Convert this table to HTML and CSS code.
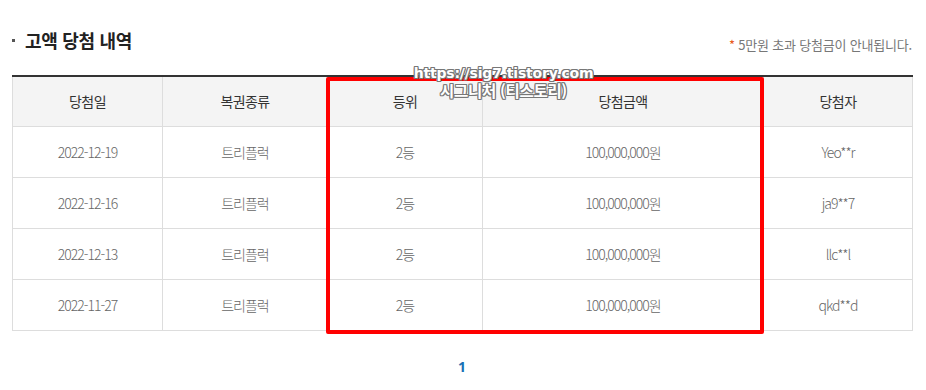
FILE: index.html
```html
<!DOCTYPE html>
<html lang="ko">
<head>
<meta charset="utf-8">
<link rel="stylesheet" href="styles.css">
</head>
<body>
<div class="page">
  <div class="head">
    <h2 class="title"><span class="dot"></span>고액 당첨 내역</h2>
    <p class="note"><span class="ast">*</span> 5만원 초과 당첨금이 안내됩니다.</p>
  </div>
  <div class="tablewrap">
    <table class="list">
      <colgroup>
        <col class="c1"><col class="c2"><col class="c3"><col class="c4"><col class="c5">
      </colgroup>
      <thead>
        <tr><th>당첨일</th><th>복권종류</th><th>등위</th><th>당첨금액</th><th>당첨자</th></tr>
      </thead>
      <tbody>
        <tr><td>2022-12-19</td><td>트리플럭</td><td>2등</td><td>100,000,000원</td><td>Yeo**r</td></tr>
        <tr><td>2022-12-16</td><td>트리플럭</td><td>2등</td><td>100,000,000원</td><td>ja9**7</td></tr>
        <tr><td>2022-12-13</td><td>트리플럭</td><td>2등</td><td>100,000,000원</td><td>llc**l</td></tr>
        <tr><td>2022-11-27</td><td>트리플럭</td><td>2등</td><td>100,000,000원</td><td>qkd**d</td></tr>
      </tbody>
    </table>
    <div class="redbox"></div>
    <div class="watermark">
      <div class="wm1">https://sig7.tistory.com</div>
      <div class="wm2">시그니처 (티스토리)</div>
    </div>
  </div>
  <div class="paging"><a class="cur">1</a></div>
</div>
</body>
</html>
```

FILE: styles.css
```css
* { box-sizing: border-box; }
html, body { margin: 0; padding: 0; background: #fff; }
body { font-family: "Noto Sans CJK KR", "Noto Sans", sans-serif; color: #333; }
.page { padding: 0 14px 0 12px; width: 926px; }
.head { display: flex; justify-content: space-between; align-items: flex-start; height: 75px; padding-top: 27px; }
.title { margin: 0; font-size: 18px; font-weight: 700; color: #222; display: flex; align-items: center; letter-spacing: -0.3px; line-height: 26px; }
.dot { width: 3px; height: 3px; background: #555; margin: 0 10px 0 0; display: inline-block; }
.note { margin: 9px 0 0 0; font-size: 13px; color: #777; letter-spacing: -0.2px; font-weight: 400; line-height: 18px; }
.ast { color: #e8591a; }
.tablewrap { position: relative; }
.list { width: 900px; border-collapse: collapse; table-layout: fixed; border-top: 2px solid #333; }
.c1 { width: 150px; } .c2 { width: 165px; } .c3 { width: 155px; } .c4 { width: 281px; } .c5 { width: 149px; }
.list th, .list td { border: 1px solid #ddd; text-align: center; height: 51px; padding: 0; }
.list th { background: #f4f4f4; font-weight: 400; color: #333; font-size: 14px; letter-spacing: -0.6px; height: 50px; border-top: 0; }
.list td { font-size: 14px; color: #666; font-weight: 300; letter-spacing: -1px; }
.redbox { position: absolute; left: 314px; top: 2px; width: 438px; height: 257px; border: 4px solid #ff0000; border-radius: 2px; }
.watermark { position: absolute; left: 400px; top: -10px; width: 183px; text-align: center; font-family: "DejaVu Sans", sans-serif; font-weight: 700; color: #fff; line-height: 17px;
  text-shadow: -1px -1px 0 #777, 1px -1px 0 #777, -1px 1px 0 #777, 1px 1px 0 #777, 0 1px 0 #777, 0 -1px 0 #777, 1px 0 0 #777, -1px 0 0 #777; }
.wm1 { font-size: 14px; letter-spacing: -0.2px; }
.wm2 { font-family: "Noto Sans CJK KR", sans-serif; font-size: 15.5px; font-weight: 700; letter-spacing: -0.3px; }
.paging { text-align: center; padding-top: 22px; width: 900px; }
.cur { color: #1a6fb5; font-weight: 700; font-size: 14px; font-family: "Noto Sans", sans-serif; }
```
